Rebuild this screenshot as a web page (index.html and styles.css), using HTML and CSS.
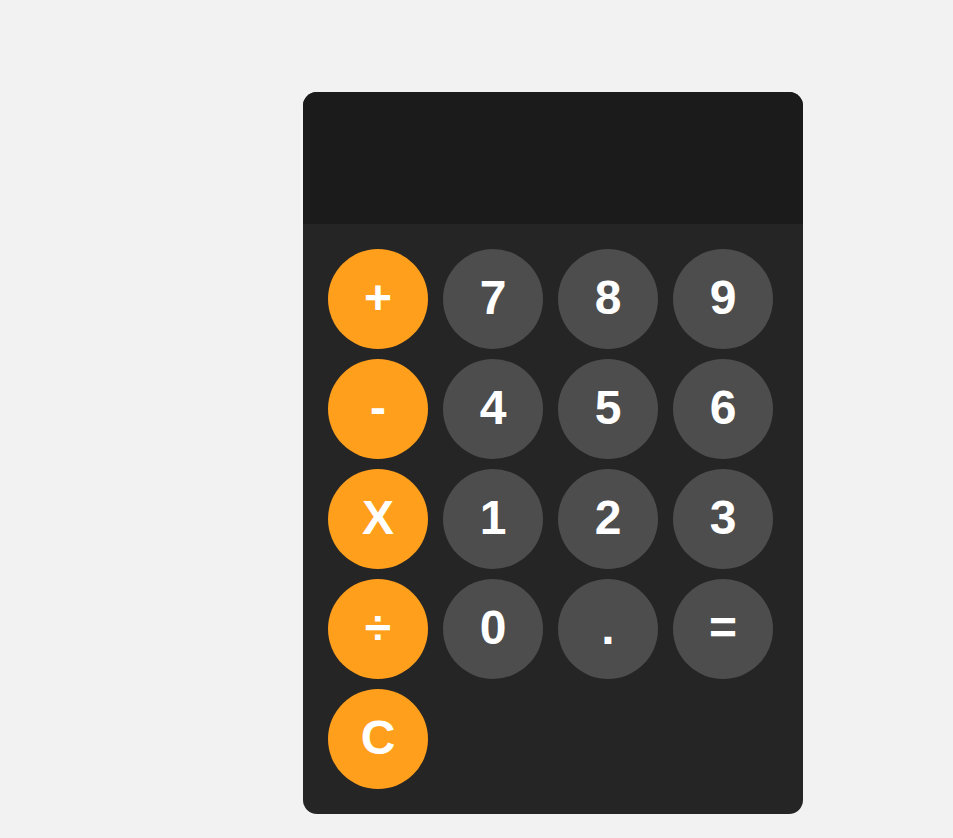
FILE: index.html
```html
<!DOCTYPE html>
<html>
<head>
<meta charset="utf-8">
<link rel="stylesheet" href="styles.css">
</head>
<body>
<div class="calculator">
  <div class="display"></div>
  <div class="keys">
    <button class="key op">+</button>
    <button class="key">7</button>
    <button class="key">8</button>
    <button class="key">9</button>
    <button class="key op">-</button>
    <button class="key">4</button>
    <button class="key">5</button>
    <button class="key">6</button>
    <button class="key op">X</button>
    <button class="key">1</button>
    <button class="key">2</button>
    <button class="key">3</button>
    <button class="key op">÷</button>
    <button class="key">0</button>
    <button class="key">.</button>
    <button class="key">=</button>
    <button class="key op">C</button>
  </div>
</div>
</body>
</html>
```
FILE: styles.css
```css
html, body {
  margin: 0;
  padding: 0;
  background: #f2f2f2;
  font-family: "Liberation Sans", Arial, sans-serif;
}
body {
  padding: 92px 0 0 303px;
}
.calculator {
  width: 500px;
  background: #252525;
  border-radius: 14px;
  overflow: hidden;
}
.display {
  height: 132px;
  background: #1b1b1b;
}
.keys {
  display: grid;
  grid-template-columns: repeat(4, 100px);
  column-gap: 15px;
  row-gap: 10px;
  padding: 25px 30px 25px 25px;
}
.key {
  width: 100px;
  height: 100px;
  border: none;
  border-radius: 50%;
  background: #4d4d4d;
  color: #ffffff;
  font-family: "Liberation Sans", Arial, sans-serif;
  font-weight: bold;
  font-size: 48px;
  padding: 0 0 3px 0;
  display: flex;
  align-items: center;
  justify-content: center;
}
.key.op {
  background: #ff9f1c;
}
```
